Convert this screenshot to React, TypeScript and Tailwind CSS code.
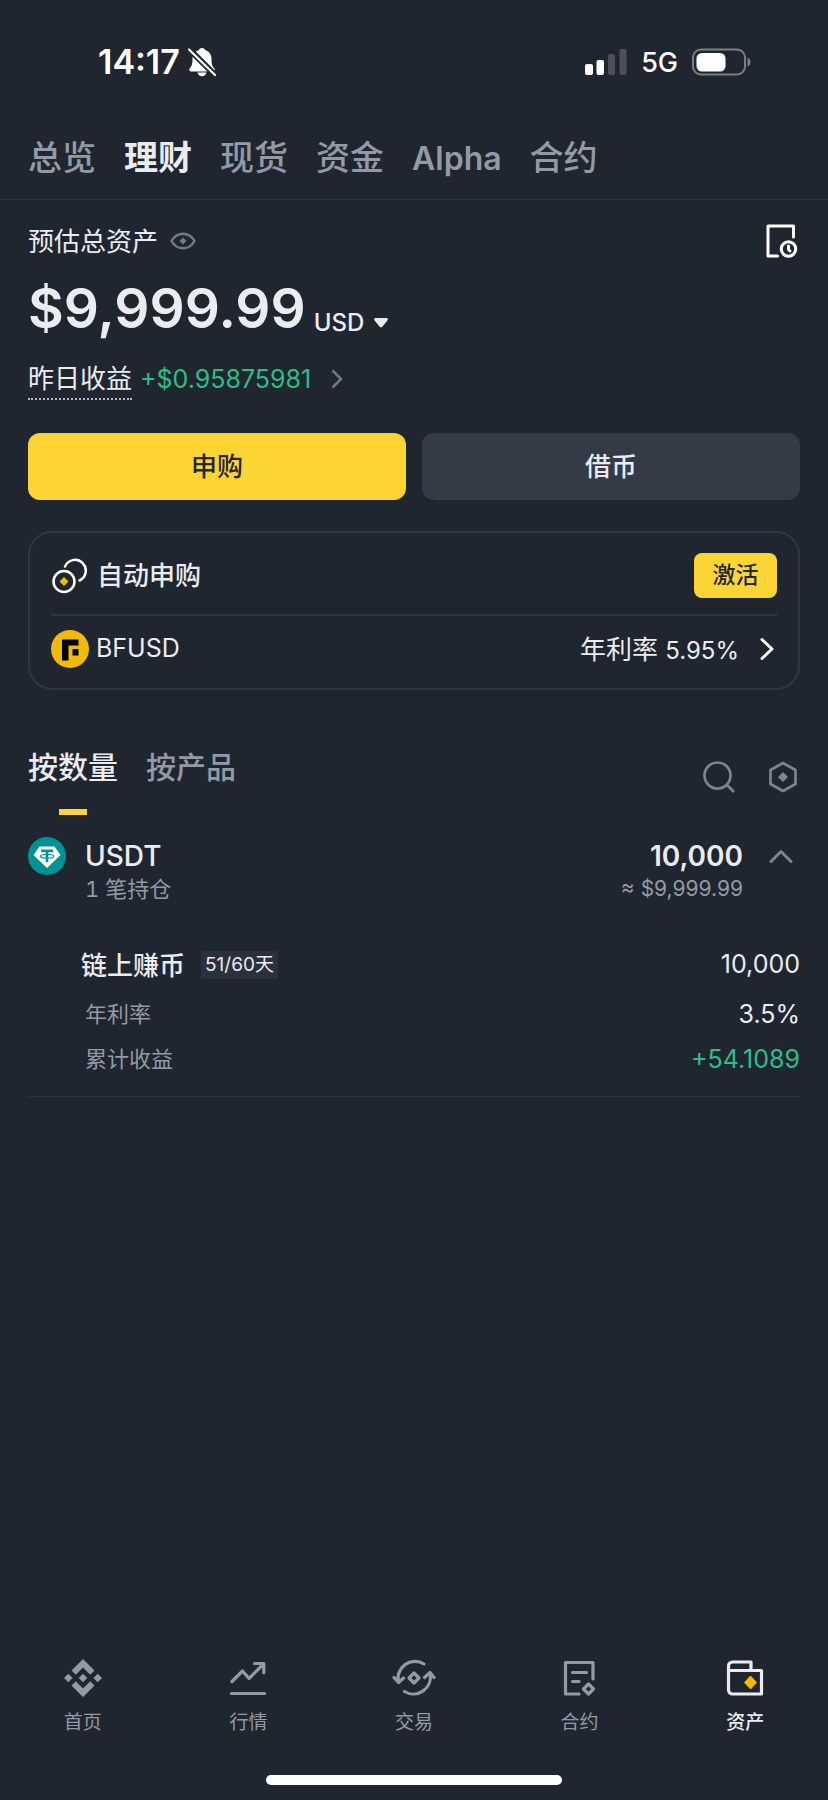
import React, { useState } from "react";

const accountTabs = ["总览", "理财", "现货", "资金", "Alpha", "合约"];
const holdingTabs = ["按数量", "按产品"];

function StatusBar() {
    return (
        <div className="flex h-[120px] items-center justify-between pt-1 pr-[76px] pl-[98px] text-white">
            <div className="flex items-center gap-2">
                <span className="text-[34px] leading-none font-semibold">14:17</span>
                <svg className="h-[30px] w-7" viewBox="0 0 28 30" fill="none">
                    <path
                        d="M14 1c1.700 0 3 1 3.400 2.300 4 1.300 6.100 4.700 6.100 8.700 0 6 1.200 7.500 2.800 9.300.9 1 .6 3.200-1.300 3.200H3c-1.900 0-2.200-2.200-1.300-3.200C3.300 19.500 4.500 18 4.500 12c0-4 2.100-7.400 6.100-8.700C11 2 12.300 1 14 1z"
                        fill="currentColor"
                    />
                    <path d="M9.500 25.500h9c-.5 2.200-2.200 3.700-4.500 3.700s-4-1.500-4.500-3.700z" fill="currentColor" />
                    <path d="M0 1l28 28" stroke="#202630" strokeWidth="6" />
                    <path d="M1 2.500l26 25.500" stroke="currentColor" strokeWidth="2.200" strokeLinecap="round" />
                </svg>
            </div>
            <div className="flex items-center gap-[14px]">
                <svg className="h-[26px] w-[42px]" viewBox="0 0 42 26" fill="currentColor">
                    <rect x="0" y="15" width="8" height="11" rx="2" />
                    <rect x="11.500" y="11" width="7.500" height="15" rx="2" />
                    <rect x="23" y="5" width="7" height="21" rx="2" fill="#4b505a" />
                    <rect x="34.500" y="0" width="7" height="26" rx="2" fill="#4b505a" />
                </svg>
                <span className="text-[27px] leading-none font-medium">5G</span>
                <svg className="h-7 w-[60px]" viewBox="0 0 60 28" fill="none">
                    <rect x="1" y="1.500" width="52" height="25" rx="8" stroke="#7a7f88" strokeWidth="2" />
                    <rect x="4.500" y="5" width="29" height="18.500" rx="5.500" fill="currentColor" />
                    <path d="M55.500 9.500c4 1.500 4 7.500 0 9z" fill="#7a7f88" />
                </svg>
            </div>
        </div>
    );
}

const EyeIcon = () => (
    <svg className="h-5 w-[26px]" viewBox="0 0 26 20" fill="none">
        <path
            d="M1.500 10C7 .2 19 .2 24.500 10 19 19.800 7 19.800 1.500 10z"
            stroke="currentColor"
            strokeWidth="2.500"
            strokeLinejoin="round"
        />
        <path d="M13 6.500l3.500 3.500-3.500 3.500L9.500 10z" fill="currentColor" />
    </svg>
);

const HistoryIcon = () => (
    <svg className="h-[34px] w-8" viewBox="0 0 32 34" fill="none" stroke="currentColor" strokeWidth="3" strokeLinecap="round" strokeLinejoin="round">
        <path d="M11.500 32H2V2h25.500v11" />
        <circle cx="22.500" cy="25" r="7.200" />
        <path d="M22.500 22v3.500l1.500 1.500" />
    </svg>
);

const AutoIcon = () => (
    <svg className="h-9 w-9" viewBox="0 0 36 36" fill="none" stroke="#fff" strokeWidth="2.500" strokeLinecap="round">
        <circle cx="13" cy="23.500" r="10.500" />
        <path d="M14 8.500A10.800 10.800 0 1 1 28.500 22.500" />
        <path d="M13 19l4.500 4.500-4.500 4.500-4.500-4.500z" fill="#f0b90b" stroke="none" />
    </svg>
);

const BfusdIcon = () => (
    <svg className="h-[38px] w-[38px]" viewBox="0 0 38 38">
        <circle cx="19" cy="19" r="19" fill="#f0b90b" />
        <path d="M11 9.500h16.500v6H17.500v15H11z" fill="#000" />
        <path d="M21.500 19h6v6.500h-6z" fill="#000" />
    </svg>
);

const UsdtIcon = () => (
    <svg className="h-[38px] w-[38px]" viewBox="0 0 38 38" fill="none">
        <circle cx="19" cy="19" r="19" fill="#009393" />
        <path d="M11.500 9.500h15L32.500 18 19 31 5.500 18z" fill="#fff" />
        <path d="M13 12.500h12v2.700h-4.700v10h-2.600v-10H13z" fill="#009393" />
        <ellipse cx="19" cy="19.200" rx="6.800" ry="1.900" stroke="#009393" strokeWidth="1.200" />
    </svg>
);

const SearchIcon = () => (
    <svg className="h-8 w-8" viewBox="0 0 32 32" fill="none" stroke="currentColor" strokeWidth="2.700">
        <circle cx="14.500" cy="14.500" r="13" />
        <path d="M23.500 23.500l7.500 7.500" />
    </svg>
);

const HexIcon = () => (
    <svg className="h-8 w-7" viewBox="0 0 28 32" fill="none">
        <path d="M14 2l12.500 7v14L14 30 1.500 23V9z" stroke="currentColor" strokeWidth="2.700" strokeLinejoin="round" />
        <path d="M14 11l5 5-5 5-5-5z" fill="currentColor" />
    </svg>
);

const HomeIcon = () => (
    <svg className="h-[38px] w-[38px]" viewBox="0 0 38 38" fill="currentColor">
        <path d="M19 0l11.500 11.500-4.300 4.300L19 8.600l-7.200 7.200-4.300-4.300z" />
        <path d="M19 38L7.500 26.500l4.300-4.300 7.200 7.200 7.200-7.200 4.300 4.300z" />
        <path d="M19 14.700l4.300 4.300-4.300 4.300-4.300-4.300z" />
        <path d="M4.300 14.700L8.600 19l-4.300 4.300L0 19z" />
        <path d="M33.700 14.700L38 19l-4.300 4.300-4.300-4.300z" />
    </svg>
);

const MarketIcon = () => (
    <svg className="h-[38px] w-[38px]" viewBox="0 0 38 38" fill="none" stroke="currentColor" strokeWidth="3.200" strokeLinecap="round" strokeLinejoin="round">
        <path d="M3 22.500L13.500 12l6.500 7.500L34.500 5M25.500 4.500h9.300v9.300" />
        <path d="M2.500 34.500h33" />
    </svg>
);

const TradeIcon = () => (
    <svg className="h-[38px] w-11" viewBox="0 0 44 38" fill="none" stroke="currentColor" strokeWidth="3.200" strokeLinecap="round" strokeLinejoin="round">
        <path d="M32 5A17 17 0 0 0 6.500 23.500M2 18.500l4.500 5 5-4.500" />
        <path d="M12.500 32.500A17 17 0 0 0 38 14.500M32.500 18.500l5.500-5 4 5" />
        <path d="M22 14l5 5-5 5-5-5z" />
    </svg>
);

const FuturesIcon = () => (
    <svg className="h-[38px] w-[38px]" viewBox="0 0 38 38" fill="none" stroke="currentColor" strokeWidth="3.200" strokeLinecap="round" strokeLinejoin="round">
        <path d="M18 35H4.500V3.500H32V20" />
        <path d="M11.500 13.500h14M11.500 22.500h6.500" />
        <path d="M27.500 25l5 5-5 5-5-5z" />
    </svg>
);

const WalletIcon = () => (
    <svg className="h-[38px] w-[38px]" viewBox="0 0 38 38" fill="none" stroke="currentColor" strokeWidth="3.200" strokeLinejoin="round">
        <path d="M2.500 11.500V7a4 4 0 0 1 4-4H25v8.500" />
        <path d="M2.500 11.500h33V35h-29a4 4 0 0 1-4-4z" />
        <path d="M24.500 17l6 6.500-6 6.500-6-6.500z" fill="#f0b90b" stroke="#f0b90b" strokeWidth="1" />
    </svg>
);

const navItems = [
    { label: "首页", icon: <HomeIcon /> },
    { label: "行情", icon: <MarketIcon /> },
    { label: "交易", icon: <TradeIcon /> },
    { label: "合约", icon: <FuturesIcon /> },
    { label: "资产", icon: <WalletIcon /> },
];

export default function App() {
    const [account, setAccount] = useState("理财");
    const [holding, setHolding] = useState("按数量");
    const [currency, setCurrency] = useState("USD");
    const [open, setOpen] = useState(true);

    return (
        <div className="flex min-h-screen flex-col bg-[#202630] font-['Inter','Noto_Sans_CJK_SC',sans-serif] text-[#eaecef]">
            <StatusBar />

            <nav className="flex h-20 items-center gap-7 border-b border-[#2b323e] px-7 pb-[3px]">
                {accountTabs.map((tab) => (
                    <button
                        key={tab}
                        onClick={() => setAccount(tab)}
                        className={
                            tab === account
                                ? "text-[34px] leading-none font-bold"
                                : "text-[34px] leading-none font-medium text-[#929aa5]"
                        }
                    >
                        {tab === "Alpha" ? <span className="text-[32px] font-semibold">{tab}</span> : tab}
                    </button>
                ))}
            </nav>

            <main className="px-7 pt-[19px]">
                <div className="flex h-11 items-center justify-between">
                    <div className="flex items-center gap-3">
                        <h1 className="text-[26px]">预估总资产</h1>
                        <button aria-label="隐藏资产" className="text-[#707a8a]">
                            <EyeIcon />
                        </button>
                    </div>
                    <button aria-label="历史记录" className="pr-0.5 text-white">
                        <HistoryIcon />
                    </button>
                </div>

                <div className="flex h-[84px] items-end">
                    <span className="text-[55px] leading-[78px] font-semibold">$9,999.99</span>
                    <label className="flex items-center gap-[10px] pb-2 pl-2">
                        <select
                            aria-label="币种"
                            value={currency}
                            onChange={(e) => setCurrency(e.target.value)}
                            className="field-sizing-content appearance-none bg-transparent text-2xl font-medium"
                        >
                            <option>USD</option>
                            <option>BTC</option>
                        </select>
                        <svg className="h-[10px] w-[14px]" viewBox="0 0 14 10" fill="currentColor">
                            <path d="M1.500 0h11c1.300 0 1.800 1.600.9 2.500L8.300 8.800c-.7.900-1.900.9-2.600 0L.6 2.500C-.3 1.600.2 0 1.500 0z" />
                        </svg>
                    </label>
                </div>

                <div className="flex items-start gap-2 pt-3">
                    <span className="border-b-2 border-dotted border-[#b7bdc6] text-[26px] leading-[39px]">昨日收益</span>
                    <a href="#income" className="flex items-center gap-5 text-[25px] leading-10 text-[#2ebd85]">
                        +$0.95875981
                        <svg className="h-5 w-3" viewBox="0 0 12 20" fill="none" stroke="#707a8a" strokeWidth="2.500">
                            <path d="M1.500 1.500l8.500 8.500-8.500 8.500" />
                        </svg>
                    </a>
                </div>

                <div className="grid grid-cols-2 gap-4 pt-[33px] text-[26px] font-medium">
                    <button className="h-[67px] rounded-xl bg-[#fcd535] text-[#202630]">申购</button>
                    <button className="h-[67px] rounded-xl bg-[#333b47]">借币</button>
                </div>

                <section className="mt-[31px] rounded-3xl border-2 border-[#2f3743] px-[21px] pb-1.5">
                    <div className="flex items-center justify-between border-b-2 border-[#2f3743] pt-5 pb-4">
                        <div className="flex items-center gap-[10px]">
                            <AutoIcon />
                            <h2 className="text-[26px] font-medium">自动申购</h2>
                        </div>
                        <button className="h-[45px] w-[83px] rounded-lg bg-[#fcd535] text-[23px] font-medium text-[#202630]">
                            激活
                        </button>
                    </div>
                    <a href="#bfusd" className="flex h-[66px] items-center justify-between">
                        <div className="flex items-center gap-[7px]">
                            <BfusdIcon />
                            <span className="text-[25px]">BFUSD</span>
                        </div>
                        <div className="flex items-center gap-5">
                            <span className="text-[26px]">
                                年利率 <span className="text-2xl">5.95%</span>
                            </span>
                            <svg className="h-6 w-[18px]" viewBox="0 0 18 24" fill="none" stroke="#fff" strokeWidth="3" strokeLinecap="round" strokeLinejoin="round">
                                <path d="M3 2.500l10 9.500L3 21.500" />
                            </svg>
                        </div>
                    </a>
                </section>

                <div className="mt-[50px] flex items-center justify-between">
                    <div className="flex gap-7">
                        {holdingTabs.map((tab) => (
                            <button
                                key={tab}
                                onClick={() => setHolding(tab)}
                                className={
                                    tab === holding
                                        ? "flex flex-col items-center gap-[15px] text-[30px] leading-[54px] font-medium"
                                        : "flex flex-col items-center gap-[15px] text-[30px] leading-[54px] font-medium text-[#929aa5]"
                                }
                            >
                                {tab}
                                <span className={tab === holding ? "h-1.5 w-7 bg-[#fcd535]" : "h-1.5 w-7"} />
                            </button>
                        ))}
                    </div>
                    <div className="flex gap-[34px] pr-[3px] pb-0.5 text-[#7c8491]">
                        <button aria-label="搜索">
                            <SearchIcon />
                        </button>
                        <button aria-label="设置">
                            <HexIcon />
                        </button>
                    </div>
                </div>

                <section className="border-b border-[#2b323e] pt-[22px] pb-[14px]">
                    <div className="flex items-start">
                        <UsdtIcon />
                        <div className="flex-1 pl-[19px]">
                            <h3 className="text-[28px] leading-[38px] font-medium">USDT</h3>
                            <p className="text-[22px] leading-7 text-[#929aa5] tabular-nums">1 笔持仓</p>
                        </div>
                        <div className="text-right">
                            <p className="text-[28px] leading-[38px] font-semibold">10,000</p>
                            <p className="text-[21px] leading-7 text-[#929aa5]">≈ $9,999.99</p>
                        </div>
                        <button
                            aria-label="展开"
                            onClick={() => setOpen(!open)}
                            className="flex h-[38px] items-center pr-[7px] pl-[26px] text-[#7c8491]"
                        >
                            <svg className="h-[14px] w-6" viewBox="0 0 24 14" fill="none" stroke="currentColor" strokeWidth="3" strokeLinecap="round" strokeLinejoin="round">
                                <path d="M2 12.500L12 2.500l10 10" />
                            </svg>
                        </button>
                    </div>

                    {open && (
                        <div className="pt-[42px]">
                            <div className="flex h-10 items-center justify-between pl-[53px]">
                                <div className="flex items-center gap-4">
                                    <h4 className="text-[26px] font-medium">链上赚币</h4>
                                    <span className="bg-[#2a313d] px-1 text-[19px] leading-7">51/60天</span>
                                </div>
                                <span className="text-[25px]">10,000</span>
                            </div>
                            <dl className="pt-[7px] pl-[57px]">
                                <div className="flex h-[45px] items-center justify-between">
                                    <dt className="text-[22px] text-[#929aa5]">年利率</dt>
                                    <dd className="text-[25px]">3.5%</dd>
                                </div>
                                <div className="flex h-[45px] items-center justify-between">
                                    <dt className="text-[22px] text-[#929aa5]">累计收益</dt>
                                    <dd className="text-[25px] text-[#2ebd85]">+54.1089</dd>
                                </div>
                            </dl>
                        </div>
                    )}
                </section>
            </main>

            <footer className="mt-auto pb-[15px]">
                <nav className="grid grid-cols-5">
                    {navItems.map((item) => (
                        <a
                            key={item.label}
                            href="#nav"
                            className={
                                item.label === "资产"
                                    ? "flex flex-col items-center gap-3 text-[19px] leading-7 font-medium"
                                    : "flex flex-col items-center gap-3 text-[19px] leading-7 text-[#929aa5]"
                            }
                        >
                            {item.icon}
                            {item.label}
                        </a>
                    ))}
                </nav>
                <div className="mx-auto mt-[38px] h-[10px] w-[296px] rounded-full bg-white" />
            </footer>
        </div>
    );
}
